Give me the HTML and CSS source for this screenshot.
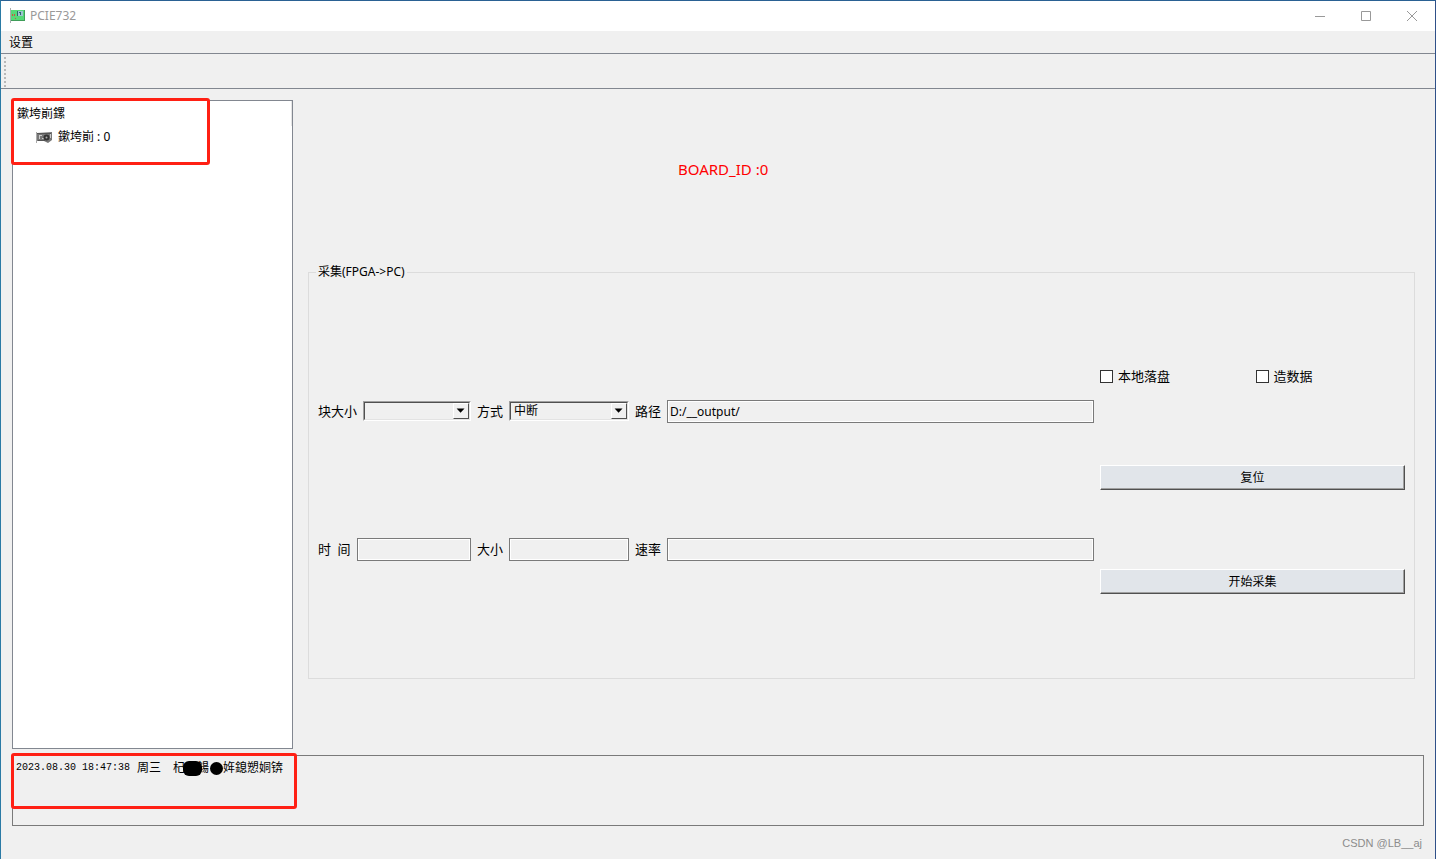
FILE: index.html
```
<!DOCTYPE html>
<html lang="zh-CN">
<head>
  <meta charset="UTF-8" />
  <meta name="viewport" content="width=device-width, initial-scale=1.0"/>
  <title>PCIE732</title>
  <link rel="stylesheet" href="styles.css">
</head>
<body>
  <header class="titlebar">
    <svg class="app-icon" width="16" height="16" viewBox="0 0 16 16">
      <path d="M1.5 0v15" stroke="#a9aeb0" fill="none"/>
      <rect x="2" y="2" width="14" height="11" fill="#55d977"/>
      <path d="M2 12.500h14M15.500 2v11" stroke="#3f9d59" fill="none"/>
      <path d="M3.500 6v2M5.500 6v2M6 10.500h1" stroke="#d0503f" fill="none"/>
      <rect x="9" y="3" width="5" height="5" fill="#9cc3cf"/>
      <path d="M8.500 3v5M10 4.500h2M11.500 5v2" stroke="#286b68" fill="none"/>
    </svg>
    <h1>PCIE732</h1>
    <div class="window-buttons">
      <button type="button" aria-label="最小化">
        <svg width="11" height="11" viewBox="0 0 11 11"><path d="M0 5.500h10"/></svg>
      </button>
      <button type="button" aria-label="最大化">
        <svg width="11" height="11" viewBox="0 0 11 11"><path d="M.5.5h9v9h-9z"/></svg>
      </button>
      <button type="button" aria-label="关闭">
        <svg width="11" height="11" viewBox="0 0 11 11"><path d="M0 0l10 10M10 0l-10 10"/></svg>
      </button>
    </div>
  </header>

  <nav class="menubar">
    <button type="button">设置</button>
  </nav>
  <div class="toolbar"><span class="grip"></span></div>

  <main>
    <div class="work">
      <aside class="tree">
        <div class="tree-header">鏉垮崱鏍</div>
        <ul>
          <li>
            <svg width="16" height="14" viewBox="0 0 16 14">
              <path d="M.5 2v11" stroke="#aaa" fill="none"/>
              <path d="M1 3l15-1v8l-4 3-4-2H1z" fill="#777"/>
              <path d="M1 3.500h14M2 10.500h7" stroke="#555" fill="none"/>
              <path d="M3 5.500h3M3.500 6v3M6 8.500h2M14.500 4v4" stroke="#ccc" fill="none"/>
              <circle cx="10.500" cy="7.500" r="3" fill="#333"/>
              <circle cx="10.500" cy="7.500" r="1" fill="#aaa"/>
            </svg>
            鏉垮崱 : 0
          </li>
        </ul>
        <span class="mark"></span>
      </aside>

      <section class="panel">
        <h2>BOARD_ID :0</h2>

        <fieldset>
          <legend>采集(FPGA-&gt;PC)</legend>
          <div class="fields">
            <div class="field">
              <label for="blockSize">块大小</label>
              <span class="combo">
                <select id="blockSize"><option></option></select>
                <svg width="16" height="16" viewBox="0 0 16 16"><path d="M3 5h9L7.500 10z"/></svg>
              </span>
            </div>
            <div class="field">
              <label for="mode">方式</label>
              <span class="combo">
                <select id="mode"><option>中断</option></select>
                <svg width="16" height="16" viewBox="0 0 16 16"><path d="M3 5h9L7.500 10z"/></svg>
              </span>
            </div>
            <div class="field">
              <label for="path">路径</label>
              <input type="text" id="path" value="D:/__output/">
            </div>
            <div class="field">
              <label for="time">时&ensp;间</label>
              <input type="text" id="time" readonly>
            </div>
            <div class="field">
              <label for="size">大小</label>
              <input type="text" id="size" readonly>
            </div>
            <div class="field">
              <label for="rate">速率</label>
              <input type="text" id="rate" readonly>
            </div>
          </div>

          <div class="actions">
            <div class="checks">
              <label><input type="checkbox">本地落盘</label>
              <label><input type="checkbox">造数据</label>
            </div>
            <button type="button">复位</button>
            <button type="button">开始采集</button>
          </div>
        </fieldset>
      </section>
    </div>

    <div class="log" role="log">
      <p><time>2023.08.30 18:47:38</time><span class="day">周三</span><span>杞</span><span class="blot"></span><span>鍚</span><span class="dot"></span><span>姩鎴愬姛锛</span></p>
      <span class="mark"></span>
    </div>
  </main>

  <footer>CSDN @LB__aj</footer>
</body>
</html>
```

FILE: styles.css
```
:root {
  --face: #f0f0f0;
  --line: #828790;
  --field-line: #7a7a7a;
  --mark: #ff2014;
}

* {
  box-sizing: border-box;
}

body {
  margin: 0;
  min-height: 100vh;
  display: flex;
  flex-direction: column;
  border: 1px solid #2a7aa5;
  border-top-color: #2a6193;
  border-right-color: #2f5089;
  border-bottom: none;
  background-color: var(--face);
  font-family: "Noto Sans", "Noto Sans CJK SC", sans-serif;
  font-size: 12px;
  line-height: 16px;
  color: #000;
}

button,
input,
select {
  font: inherit;
  color: inherit;
}

/* title bar */
.titlebar {
  height: 30px;
  display: flex;
  align-items: center;
  padding-left: 8px;
  background-color: #fff;
}

.titlebar h1 {
  flex: 1;
  margin: 0 0 0 5px;
  font-size: 12px;
  font-weight: 400;
  color: #999;
}

.window-buttons {
  display: flex;
}

.window-buttons button {
  width: 46px;
  height: 28px;
  padding: 0;
  border: none;
  background: none;
  display: flex;
  justify-content: center;
  align-items: center;
}

.window-buttons path {
  fill: none;
  stroke: #999;
}

.menubar {
  height: 22px;
  display: flex;
  align-items: center;
  padding: 2px 8px 0;
}

.menubar button {
  padding: 0;
  border: none;
  background: none;
}

.toolbar {
  height: 36px;
  border-top: 1px solid var(--line);
  border-bottom: 1px solid var(--line);
  padding: 3px;
}

.grip {
  display: block;
  width: 2px;
  height: 30px;
  background: repeating-linear-gradient(#b8b8b8 0 2px, var(--face) 2px 4px);
}

/* work area */
main {
  flex: 1;
  display: flex;
  flex-direction: column;
  gap: 6px;
  padding: 11px 11px 0;
}

.work {
  flex: 1;
  display: flex;
  gap: 15px;
}

.tree {
  position: relative;
  width: 281px;
  background-color: #fff;
  border: 1px solid var(--line);
}

.tree-header {
  height: 25px;
  padding: 5px 4px;
  border-right: 1px solid #e5e5e5;
}

.tree ul {
  list-style: none;
  margin: 0;
  padding: 0 0 0 23px;
}

.tree li {
  display: flex;
  align-items: center;
  gap: 6px;
  height: 22px;
}

.mark {
  position: absolute;
  top: -3px;
  left: -2px;
  border: 3px solid var(--mark);
  border-radius: 3px;
}

.tree .mark {
  width: 199px;
  height: 67px;
}

.log .mark {
  width: 286px;
  height: 56px;
}

.panel {
  flex: 1;
  display: flex;
  flex-direction: column;
  padding: 0 9px 70px 0;
}

.panel h2 {
  width: 75%;
  height: 138px;
  margin: 0 0 26px;
  display: flex;
  justify-content: center;
  align-items: center;
  font-size: 15px;
  font-weight: 400;
  color: #f00;
}

fieldset {
  flex: 1;
  min-width: 0;
  margin: 0;
  padding: 2px 9px 0;
  border: 1px solid #dcdcdc;
  display: flex;
  align-items: center;
  gap: 6px;
}

legend {
  margin-left: -2px;
  padding: 0 2px;
}

.fields {
  flex: 1;
  display: grid;
  grid-template-columns: 153px 152px 1fr;
  gap: 115px 6px;
}

.field {
  display: flex;
  align-items: center;
  gap: 6px;
}

.field label,
.checks label {
  font-size: 13px;
}

.field input {
  flex: 1;
  min-width: 0;
  height: 23px;
  padding: 0 2px;
  border: 1px solid var(--field-line);
  box-shadow: inset 0 0 0 1px #fff;
  background-color: var(--face);
}

.combo {
  flex: 1;
  position: relative;
  height: 20px;
  border: 1px solid #fff;
  border-top-color: #a0a0a0;
  border-left-color: #a0a0a0;
}

.combo select {
  appearance: none;
  display: block;
  width: 100%;
  height: 18px;
  padding: 0 18px 0 3px;
  border: 1px solid #505050;
  border-right-color: #e3e3e3;
  border-bottom-color: #e3e3e3;
  border-radius: 0;
  background-color: var(--face);
  line-height: 16px;
}

.combo svg {
  position: absolute;
  top: 1px;
  right: 1px;
  border: 1px solid #fff;
  border-right-color: #505050;
  border-bottom-color: #505050;
  background-color: var(--face);
  pointer-events: none;
}

.actions {
  width: 305px;
  display: flex;
  flex-direction: column;
  gap: 79px;
}

.actions button {
  height: 25px;
  padding: 0;
  border: 1px solid;
  border-color: #fff #505050 #505050 #fff;
  box-shadow: inset -1px -1px 0 #a0a0a0;
  background-color: #e1e5ea;
}

.checks {
  height: 20px;
  display: grid;
  grid-template-columns: 1fr 1fr;
  gap: 6px;
}

.checks label {
  display: flex;
  align-items: center;
  gap: 5px;
}

.checks input {
  appearance: none;
  width: 13px;
  height: 13px;
  margin: 0;
  border: 1px solid #333;
  background-color: #fff;
}

.checks input:checked {
  background-color: #333;
}

/* log */
.log {
  position: relative;
  height: 71px;
  padding: 4px 3px;
  border: 1px solid var(--field-line);
}

.log p {
  margin: 0;
  display: flex;
  align-items: center;
}

.log time {
  width: 121px;
  font-family: "Liberation Mono", monospace;
  font-size: 10px;
}

.day {
  width: 36px;
}

.blot {
  z-index: 1;
  width: 19px;
  height: 15px;
  margin: 0 -5px 0 -2px;
  border-radius: 6px;
  background-color: #000;
}

.dot {
  width: 13px;
  height: 13px;
  margin-left: 1px;
  border-radius: 50%;
  background-color: #000;
}

footer {
  height: 33px;
  padding: 9px 13px 0 0;
  text-align: right;
  font-family: "Liberation Sans", sans-serif;
  font-size: 11px;
  color: #8c8c8c;
}
```
